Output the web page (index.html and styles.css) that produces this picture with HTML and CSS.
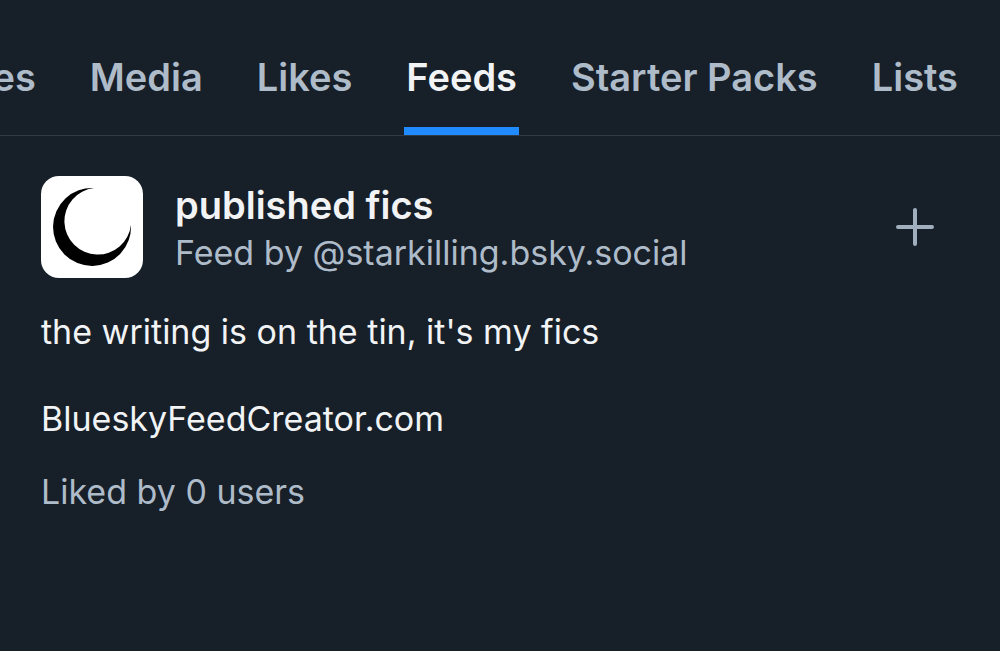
FILE: index.html
```
<!DOCTYPE html>
<html lang="en">
<head>
    <meta charset="UTF-8">
    <meta name="viewport" content="width=device-width, initial-scale=1">
    <title>Feeds</title>
    <link rel="stylesheet" href="styles.css">
</head>
<body>
<nav class="tabs">
    <a href="#" class="tab">Replies</a>
    <a href="#" class="tab">Media</a>
    <a href="#" class="tab">Likes</a>
    <a href="#" class="tab active" aria-current="page">Feeds</a>
    <a href="#" class="tab">Starter Packs</a>
    <a href="#" class="tab">Lists</a>
</nav>
<main class="feed">
    <div class="feed-header">
        <svg class="avatar" viewBox="0 0 102 102" aria-hidden="true">
            <path d="M53 12 A39 39 0 1 0 90 49 A33.4 33.4 0 1 1 53 12 Z" fill="#000"/>
        </svg>
        <div class="feed-info">
            <h1 class="feed-name">published fics</h1>
            <p class="feed-by">Feed by @starkilling.bsky.social</p>
        </div>
        <button type="button" class="add" aria-label="Add feed">
            <svg viewBox="0 0 40 40" aria-hidden="true">
                <path d="M20 3 V37 M3 20 H37"/>
            </svg>
        </button>
    </div>
    <p class="description">the writing is on the tin, it's my fics</p>
    <p class="description"><a href="#">BlueskyFeedCreator.com</a></p>
    <p class="likes">Liked by 0 users</p>
</main>
</body>
</html>
```
FILE: styles.css
```
* {
    margin: 0;
    padding: 0;
    box-sizing: border-box;
}
body {
    background-color: #171f28;
    color: #f1f3f5;
    font-family: Inter, "Liberation Sans", sans-serif;
    font-size: 34px;
    line-height: 44px;
}
a {
    color: inherit;
    text-decoration: none;
}
/* tabs */
.tabs {
    display: flex;
    justify-content: flex-end;
    gap: 50px;
    padding: 52px 40px 0;
    overflow: hidden;
    border-bottom: 1px solid #313a45;
}
.tab {
    flex: none;
    padding: 0 2px 24px;
    border-bottom: 8px solid transparent;
    color: #aebbc9;
    font-size: 38px;
    font-weight: 600;
    line-height: 51px;
    white-space: nowrap;
}
.tab.active {
    color: #f1f3f5;
    border-bottom-color: #208bfe;
}
/* feed card */
.feed {
    padding: 40px 41px;
}
.feed-header {
    display: flex;
    align-items: center;
    gap: 32px;
    margin-bottom: 32px;
}
.avatar {
    flex: none;
    width: 102px;
    height: 102px;
    border-radius: 18px;
    background-color: #fff;
}
.feed-info {
    flex: 1;
    min-width: 0;
}
.feed-name {
    font-size: 38px;
    font-weight: 600;
    line-height: 51px;
}
.feed-by, .likes {
    color: #aebbc9;
}
.add {
    flex: none;
    width: 40px;
    height: 40px;
    margin-right: 24px;
    border: 0;
    background: none;
    cursor: pointer;
}
.add svg {
    display: block;
    fill: none;
    stroke: #a0aebd;
    stroke-width: 4;
    stroke-linecap: round;
}
.description + .description {
    margin-top: 43px;
}
.likes {
    margin-top: 29px;
}
```
